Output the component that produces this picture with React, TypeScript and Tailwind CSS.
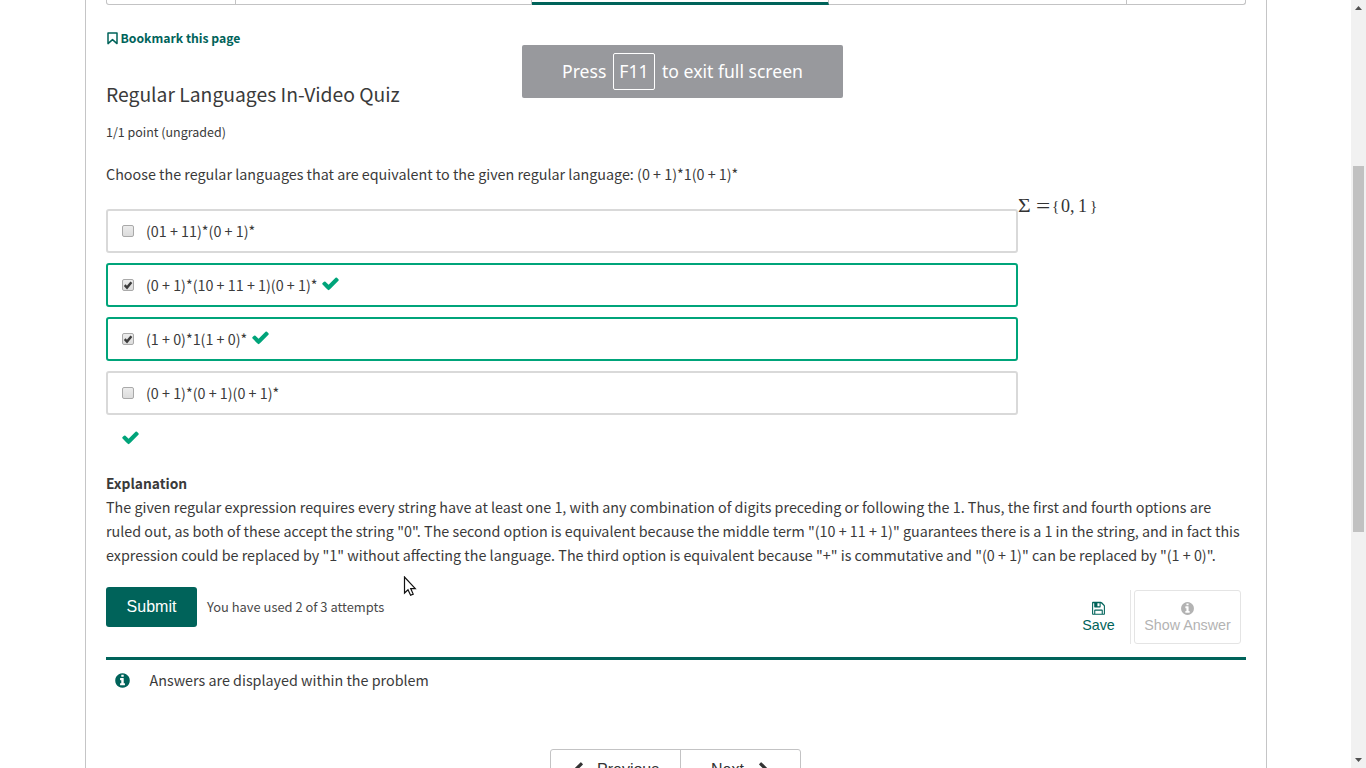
import type { ReactNode } from "react";

const paths = {
  check:
    "M1671 566q0 40-28 68l-724 724-136 136q-28 28-68 28t-68-28l-136-136-362-362q-28-28-28-68t28-68l136-136q28-28 68-28t68 28l294 295 656-657q28-28 68-28t68 28l136 136q28 28 28 68z",
  info: "M1152 1376v-160q0-14-9-23t-23-9h-96v-512q0-14-9-23t-23-9h-320q-14 0-23 9t-9 23v160q0 14 9 23t23 9h96v320h-96q-14 0-23 9t-9 23v160q0 14 9 23t23 9h448q14 0 23-9t9-23zm-128-896v-160q0-14-9-23t-23-9h-192q-14 0-23 9t-9 23v160q0 14 9 23t23 9h192q14 0 23-9t9-23zm640 416q0 209-103 385.5t-279.5 279.5-385.5 103-385.5-103-279.5-279.5-103-385.5 103-385.5 279.5-279.5 385.5-103 385.5 103 279.5 279.5 103 385.5z",
  save: "M512 1536h768v-384h-768v384zm896 0h128v-896q0-14-10-38.5t-20-34.5l-281-281q-10-10-34-20t-39-10v416q0 40-28 68t-68 28h-576q-40 0-68-28t-28-68v-416h-128v1280h128v-416q0-40 28-68t68-28h832q40 0 68 28t28 68v416zm-384-928v-320q0-13-9.5-22.5t-22.5-9.5h-192q-13 0-22.5 9.5t-9.5 22.5v320q0 13 9.5 22.5t22.5 9.5h192q13 0 22.5-9.5t9.5-22.5zm640 32v896q0 40-28 68t-68 28h-1344q-40 0-68-28t-28-68v-1344q0-40 28-68t68-28h928q40 0 88 20t76 48l280 280q28 28 48 76t20 88z",
  left: "M1427 301l-531 531 531 531q19 19 19 45t-19 45l-166 166q-19 19-45 19t-45-19l-742-742q-19-19-19-45t19-45l742-742q19-19 45-19t45 19l166 166q19 19 19 45t-19 45z",
  right:
    "M1363 877l-742 742q-19 19-45 19t-45-19l-166-166q-19-19-19-45t19-45l531-531-531-531q-19-19-19-45t19-45l166-166q19-19 45-19t45 19l742 742q19 19 19 45t-19 45z",
};

function Icon({ name, className }: { name: keyof typeof paths; className: string }) {
  return (
    <svg viewBox="0 0 1792 1792" fill="currentColor" className={`block shrink-0 ${className}`}>
      <path d={paths[name]} />
    </svg>
  );
}

function Checkbox({ checked }: { checked: boolean }) {
  return (
    <span className="-mt-px ml-[14px] flex h-3 w-3 shrink-0 items-center justify-center rounded-[2px] border border-[#a9a9a9] bg-gradient-to-b from-[#ececec] to-[#dcdcdc]">
      {checked && (
        <svg viewBox="0 0 10 10" className="block h-[10px] w-[10px] shrink-0">
          <path d="M1.7 5.2 L4 7.6 L8.4 2.2" fill="none" stroke="#3c3c3c" strokeWidth="2.4" />
        </svg>
      )}
    </span>
  );
}

function Option({ text, correct }: { text: string; correct: boolean }) {
  return (
    <label
      className={`flex h-11 items-center rounded-[3px] border-2 ${correct ? "border-[#00a47a]" : "border-[#d9d9d9]"}`}
    >
      <Checkbox checked={correct} />
      <span className="ml-3 whitespace-nowrap leading-6">{text}</span>
      {correct && <Icon name="check" className="-mt-[3px] ml-[3.5px] h-[19px] w-[19px] text-[#00a47a]" />}
    </label>
  );
}

function Line({ children }: { children: ReactNode }) {
  return <span className="block h-6 whitespace-nowrap">{children}</span>;
}

const options = [
  { text: "(01 + 11)*(0 + 1)*", correct: false },
  { text: "(0 + 1)*(10 + 11 + 1)(0 + 1)*", correct: true },
  { text: "(1 + 0)*1(1 + 0)*", correct: true },
  { text: "(0 + 1)*(0 + 1)(0 + 1)*", correct: false },
];

export default function App() {
  return (
    <div className="relative flex h-[768px] w-[1366px] overflow-hidden bg-white font-['Noto_Sans_CJK_SC',sans-serif] text-[14.33px] leading-6 text-[#3a3a3a]">
      <main className="ml-[85px] flex h-full w-[1182px] flex-col border-x border-[#c5c5c6] px-5">
        <div className="flex h-[5px] shrink-0 rounded-b-[3px] border border-t-0 border-[#c3c3c4]">
          <div className="w-[129px] border-r border-[#c3c3c4]" />
          <div className="w-[296px] border-r border-[#c3c3c4]" />
          <div className="-mb-px w-[297px] border-r border-b-[3px] border-r-[#c3c3c4] border-b-[#00635a]" />
          <div className="w-[298px] border-r border-[#c3c3c4]" />
          <div className="flex-1" />
        </div>

        <div className="mt-[21px] flex h-6 shrink-0 items-center text-[12.21px] font-semibold text-[#00635a]">
          <svg viewBox="0 0 12 13" className="ml-px block h-[13px] w-3">
            <path d="M1 1 H10 V11.6 L5.5 7.6 L1 11.6 Z" fill="none" stroke="currentColor" strokeWidth="1.5" strokeLinejoin="round" />
          </svg>
          <span className="ml-[1.5px] whitespace-nowrap">Bookmark this page</span>
        </div>

        <h3 className="mt-[28px] h-8 shrink-0 whitespace-nowrap text-[19.31px] leading-8">Regular Languages In-Video Quiz</h3>
        <p className="mt-[10px] h-6 shrink-0 text-[12.48px]">1/1 point (ungraded)</p>
        <p className="mt-[18px] h-6 shrink-0 whitespace-nowrap">
          Choose the regular languages that are equivalent to the given regular language: (0 + 1)*1(0 + 1)*
        </p>

        <div className="mt-[9px] flex shrink-0 items-start">
          <div className="mt-[14px] flex w-[912px] flex-col gap-[10px]">
            {options.map((o) => (
              <Option key={o.text} text={o.text} correct={o.correct} />
            ))}
          </div>
          <div className="-mt-px flex h-6 font-['Liberation_Serif',serif] text-[18px] text-[#333]">
            <span className="w-[18px] origin-left scale-x-115 text-[19px]">Σ</span>
            <span className="w-[16px] origin-left scale-x-115 text-[22px]">=</span>
            <span className="w-[9px] text-[15px]">{"{"}</span>
            <span className="w-[17px]">0,</span>
            <span className="w-[12px]">1</span>
            <span className="text-[15px]">{"}"}</span>
          </div>
        </div>
        <Icon name="check" className="ml-[14.5px] mt-[13px] h-[19px] w-[19px] text-[#00a47a]" />

        <p className="mt-[24px] h-6 shrink-0 text-[13.8px] font-bold">Explanation</p>
        <p className="shrink-0">
          <Line>
            The given regular expression requires every string have at least one 1, with any combination of digits preceding or
            following the 1. Thus, the first and fourth options are
          </Line>
          <Line>
            ruled out, as both of these accept the string "0". The second option is equivalent because the middle term "(10 + 11 +
            1)" guarantees there is a 1 in the string, and in fact this
          </Line>
          <Line>
            expression could be replaced by "1" without affecting the language. The third option is equivalent because "+" is
            commutative and "(0 + 1)" can be replaced by "(1 + 0)".
          </Line>
        </p>

        <div className="mt-[20px] flex h-[70px] shrink-0 items-start">
          <button className="h-10 w-[91px] rounded-[3px] bg-[#00635a] pb-px font-['Liberation_Sans',sans-serif] text-[16px] text-white">
            Submit
          </button>
          <span className="ml-[10px] mt-[8px] text-[12.9px] text-[#4a4a4a]">You have used 2 of 3 attempts</span>
          <div className="ml-auto mr-[5px] mt-[3px] flex font-['Liberation_Sans',sans-serif] text-[14.3px] leading-[17px]">
            <button className="mr-[3px] flex h-[54px] w-[65px] flex-col items-center border-r border-[#e6e6e6] pl-[1px] pt-[11px] text-[#00635a]">
              <Icon name="save" className="h-[15px] w-[15px]" />
              <span className="mt-px">Save</span>
            </button>
            <button className="flex h-[54px] w-[107px] flex-col items-center rounded-[3px] border border-[#e4e4e4] pt-[10px] text-[#b3b3b3]">
              <Icon name="info" className="h-[15px] w-[15px]" />
              <span className="mt-px whitespace-nowrap">Show Answer</span>
            </button>
          </div>
        </div>

        <div className="flex h-[45px] shrink-0 items-start border-t-[3px] border-[#00635a] pt-2">
          <Icon name="info" className="ml-2 mt-1 h-[17px] w-[17px] text-[#00635a]" />
          <span className="ml-[18.5px]">Answers are displayed within the problem</span>
        </div>

        <nav className="ml-[444px] mt-[47px] flex h-[42px] w-[251px] shrink-0 rounded-[3px] border border-[#c3c3c4] font-['Liberation_Sans',sans-serif] text-[16px] text-[#333]">
          <button className="flex w-[130px] items-center border-r border-[#c3c3c4] pl-[19px]">
            <Icon name="left" className="h-4 w-4" />
            <span className="ml-[11px]">Previous</span>
          </button>
          <button className="flex items-center pl-[30px]">
            <span>Next</span>
            <Icon name="right" className="ml-[12px] h-4 w-4" />
          </button>
        </nav>
      </main>

      <div className="ml-auto flex w-[15px] flex-col items-center bg-[#f1f1f1]">
        <svg viewBox="0 0 15 15" className="block h-[15px] w-[15px]">
          <path d="M4 10 L7.5 6 L11 10 Z" fill="#505050" />
        </svg>
        <div className="mt-[151px] h-[366px] w-[11px] bg-[#c1c1c1]" />
        <svg viewBox="0 0 15 15" className="mt-auto block h-[15px] w-[15px]">
          <path d="M4 5 L11 5 L7.5 9 Z" fill="#505050" />
        </svg>
      </div>

      <div className="absolute left-[522px] top-[45px] flex h-[53px] w-[321px] items-center rounded-[2px] bg-[#98999d] pl-10 font-['Noto_Sans',sans-serif] text-[17.6px] text-white">
        <span className="w-[51px] pb-[2px]">Press</span>
        <span className="flex h-[37px] w-[42px] items-center justify-center rounded-[2px] border border-white pb-[2px]">F11</span>
        <span className="ml-[7px] whitespace-nowrap pb-[2px]">to exit full screen</span>
      </div>

      <svg viewBox="0 0 14 22" className="absolute left-[403px] top-[576px] h-[22px] w-[14px]">
        <path d="M1.5 1 V17 L5 13.7 L7.6 19.3 L10.2 18.1 L7.7 12.6 H12.3 Z" fill="#fff" stroke="#111" strokeWidth="1.2" />
      </svg>
    </div>
  );
}
